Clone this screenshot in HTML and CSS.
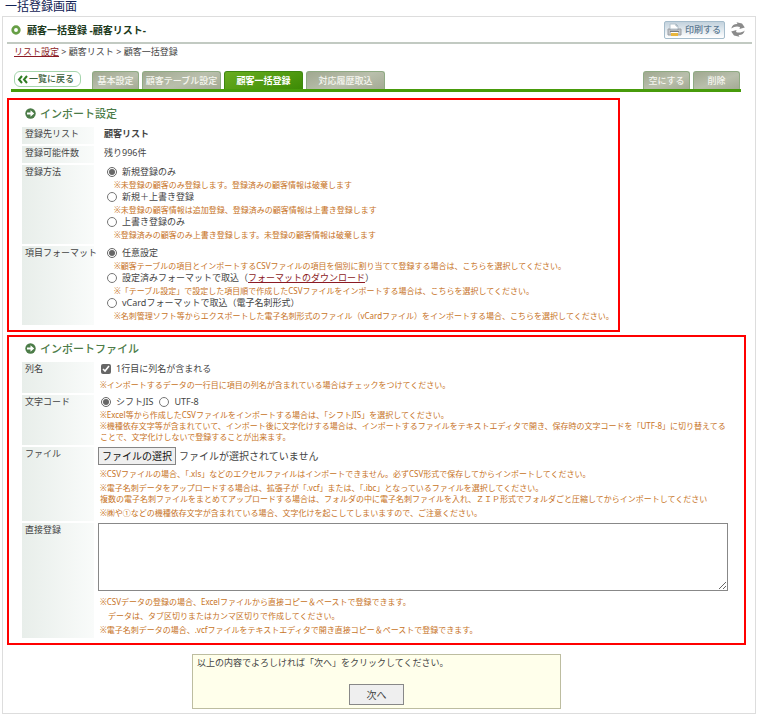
FILE: index.html
```html
<!DOCTYPE html>
<html lang="ja">
<head>
<meta charset="utf-8">
<title>一括登録画面</title>
<link rel="stylesheet" href="styles.css">
</head>
<body>
<h1 class="page-title">一括登録画面</h1>
<main class="frame">
  <header class="header">
    <svg class="ring" viewBox="0 0 10 10" aria-hidden="true"><circle cx="5" cy="5" r="3.3" fill="#fff" stroke="#669e45" stroke-width="2.7"/></svg>
    <h2 class="title">顧客一括登録 -顧客リスト-</h2>
    <button class="print" type="button">
      <svg viewBox="0 0 15 14" aria-hidden="true"><path d="M3 6V1h6l2 2v3z" fill="#fff" stroke="#b4c3cd"/><path d="M9 1v2h2" fill="none" stroke="#9bacb8"/><path d="M1 6h2v1h8V6h3v6H1z" fill="#c3c5c8" stroke="#9a9fa5"/><path d="M3 8.500h9" stroke="#777c82"/><path d="M4 10h7v3H4z" fill="#e9b63c"/><path d="M4 9h7v1H4z" fill="#fff"/></svg>
      <span>印刷する</span>
    </button>
    <button class="reload" type="button" aria-label="更新">
      <svg viewBox="0 0 14 15" aria-hidden="true"><g fill="#8b8b8b"><path d="M.3 6.500C1 3 3.500 1.800 6.500 2L5.500.2 11 1.500 13.800 5.500 8.500 7 9 5C6 3.800 3 4.500.3 6.500z"/><path d="M13.700 8.500C13 12 10.500 13.200 7.500 13l1 1.800L3 13.500.2 9.500 5.500 8 5 10C8 11.200 11 10.500 13.700 8.500z"/></g></svg>
    </button>
  </header>
  <nav class="crumbs"><a href="#">リスト設定</a> &gt; 顧客リスト &gt; 顧客一括登録</nav>
  <nav class="tabs">
    <a class="back" href="#"><svg viewBox="0 0 12 9" aria-hidden="true"><path d="M5 1L2 4.500 5 8M10 1L7 4.500 10 8" fill="none" stroke="#2f7d22" stroke-width="2"/></svg>一覧に戻る</a>
    <a class="tab" href="#">基本設定</a>
    <a class="tab wide" href="#">顧客テーブル設定</a>
    <a class="tab wide active" href="#">顧客一括登録</a>
    <a class="tab wide" href="#">対応履歴取込</a>
    <a class="tab end" href="#">空にする</a>
    <a class="tab" href="#">削除</a>
  </nav>

  <form class="form">
    <section class="box settings">
      <h3 class="heading"><svg viewBox="0 0 11 11" aria-hidden="true"><circle cx="5.500" cy="5.500" r="5.200" fill="#4c7c48"/><path d="M2 4.500h3.500V2.200L9.200 5.500 5.500 8.800V6.500H2z" fill="#fff"/></svg>インポート設定</h3>
      <div class="rows">
        <div class="row"><div class="name">登録先リスト</div><div class="cell"><b>顧客リスト</b></div></div>
        <div class="row"><div class="name">登録可能件数</div><div class="cell">残り996件</div></div>
        <div class="row" role="radiogroup" aria-label="登録方法"><div class="name">登録方法</div><div class="cell choices">
          <label class="option"><input type="radio" name="method" checked>新規登録のみ</label>
          <p class="note">※未登録の顧客のみ登録します。登録済みの顧客情報は破棄します</p>
          <label class="option"><input type="radio" name="method">新規＋上書き登録</label>
          <p class="note">※未登録の顧客情報は追加登録、登録済みの顧客情報は上書き登録します</p>
          <label class="option"><input type="radio" name="method">上書き登録のみ</label>
          <p class="note">※登録済みの顧客のみ上書き登録します。未登録の顧客情報は破棄します</p>
        </div></div>
        <div class="row" role="radiogroup" aria-label="項目フォーマット"><div class="name">項目フォーマット</div><div class="cell choices">
          <label class="option"><input type="radio" name="format" checked>任意設定</label>
          <p class="note">※顧客テーブルの項目とインポートするCSVファイルの項目を個別に割り当てて登録する場合は、こちらを選択してください。</p>
          <label class="option"><input type="radio" name="format">設定済みフォーマットで取込（<a href="#">フォーマットのダウンロード</a>）</label>
          <p class="note">※「テーブル設定」で設定した項目順で作成したCSVファイルをインポートする場合は、こちらを選択してください。</p>
          <label class="option"><input type="radio" name="format">vCardフォーマットで取込（電子名刺形式）</label>
          <p class="note">※名刺管理ソフト等からエクスポートした電子名刺形式のファイル（vCardファイル）をインポートする場合、こちらを選択してください。</p>
        </div></div>
      </div>
    </section>

    <section class="box files">
      <h3 class="heading"><svg viewBox="0 0 11 11" aria-hidden="true"><circle cx="5.500" cy="5.500" r="5.200" fill="#4c7c48"/><path d="M2 4.500h3.500V2.200L9.200 5.500 5.500 8.800V6.500H2z" fill="#fff"/></svg>インポートファイル</h3>
      <div class="rows">
        <div class="row"><div class="name">列名</div><div class="cell">
          <label class="option"><input type="checkbox" checked>1行目に列名が含まれる</label>
          <p class="note">※インポートするデータの一行目に項目の列名が含まれている場合はチェックをつけてください。</p>
        </div></div>
        <div class="row"><div class="name">文字コード</div><div class="cell">
          <div class="options" role="radiogroup" aria-label="文字コード">
            <label class="option"><input type="radio" name="code" checked>シフトJIS</label>
            <label class="option"><input type="radio" name="code">UTF-8</label>
          </div>
          <p class="note tight">※Excel等から作成したCSVファイルをインポートする場合は、「シフトJIS」を選択してください。<br>※機種依存文字等が含まれていて、インポート後に文字化けする場合は、インポートするファイルをテキストエディタで開き、保存時の文字コードを「UTF-8」に切り替えてる<br>ことで、文字化けしないで登録することが出来ます。</p>
        </div></div>
        <div class="row"><div class="name">ファイル</div><div class="cell">
          <label class="file"><input type="file"><span class="choose">ファイルの選択</span><span>ファイルが選択されていません</span></label>
          <p class="note">※CSVファイルの場合、「.xls」などのエクセルファイルはインポートできません。必ずCSV形式で保存してからインポートしてください。</p>
          <p class="note">※電子名刺データをアップロードする場合は、拡張子が「.vcf」または、「.ibc」となっているファイルを選択してください。<br>複数の電子名刺ファイルをまとめてアップロードする場合は、フォルダの中に電子名刺ファイルを入れ、ＺＩＰ形式でフォルダごと圧縮してからインポートしてください</p>
          <p class="note">※㈱や①などの機種依存文字が含まれている場合、文字化けを起こしてしまいますので、ご注意ください。</p>
        </div></div>
        <div class="row"><label class="name" for="direct">直接登録</label><div class="cell">
          <textarea id="direct" class="direct"></textarea>
          <p class="note">※CSVデータの登録の場合、Excelファイルから直接コピー＆ペーストで登録できます。</p>
          <p class="note">　データは、タブ区切りまたはカンマ区切りで作成してください。</p>
          <p class="note">※電子名刺データの場合、.vcfファイルをテキストエディタで開き直接コピー＆ペーストで登録できます。</p>
        </div></div>
      </div>
    </section>

    <div class="confirm">
      <p>以上の内容でよろしければ「次へ」をクリックしてください。</p>
      <button class="next" type="button">次へ</button>
    </div>
  </form>
</main>
</body>
</html>
```
FILE: styles.css
```css
* { box-sizing: border-box; }
body {
  margin: 0;
  background: #fff;
  color: #444;
  font: 9px/14px "Noto Sans", "Noto Sans CJK JP", sans-serif;
}
h1, h2, h3, p { margin: 0; }
button { font-family: inherit; }
a { color: #8b1a24; }

.page-title {
  padding-left: 5px;
  color: #112255;
  font-size: 12px;
  font-weight: 400;
  line-height: 13px;
}
.frame {
  margin: 3px 4px 0 2px;
  border: 1px solid #ddd;
}
.header {
  display: flex;
  align-items: center;
  height: 27px;
  margin: 0 3px 0 4px;
  padding: 0 7px 0 4px;
  border-bottom: 2px solid #c2cac2;
}
.ring { width: 10px; height: 10px; }
.title {
  margin: 0 auto 0 6px;
  color: #1c3a1c;
  font-size: 10px;
}
.print {
  display: flex;
  align-items: center;
  gap: 3px;
  height: 18px;
  margin-right: 6px;
  padding: 0 3px 0 2px;
  border: 1px solid #a5bccb;
  border-radius: 2px;
  background: linear-gradient(#c3d2dd, #fff);
  color: #5c7991;
  font-size: 9px;
  font-weight: 500;
}
.print svg { width: 15px; height: 14px; }
.reload { padding: 0; border: 0; background: none; }
.reload svg { display: block; width: 14px; height: 15px; }
.crumbs { padding: 1px 11px 0; }

.tabs {
  display: flex;
  align-items: flex-end;
  gap: 3px;
  margin: 12px 14px 0 8px;
  padding: 0 1px 0 3px;
  border-bottom: 3px solid #479b0b;
}
.tabs a { text-decoration: none; }
.back {
  display: flex;
  align-items: center;
  height: 16px;
  margin: 0 8px 2px 0;
  padding: 0 6px 0 2px;
  border: 1px solid #a5d5ac;
  border-radius: 6px;
  color: #3b603b;
  font-weight: 500;
}
.back svg { width: 12px; height: 9px; }
.tab {
  width: 47px;
  height: 18px;
  border: 1px solid #8faa83;
  border-bottom: 0;
  border-radius: 3px 3px 0 0;
  background: linear-gradient(160deg, #a0a890, #b9bfac 55%, #a4aa94);
  color: #f5f5ef;
  line-height: 17px;
  text-align: center;
  font-weight: 500;
}
.tab.wide { width: 79px; }
.tab.active {
  border-color: #3e8710;
  background: linear-gradient(160deg, #69ad20, #3d8b05);
  color: #fff;
  font-weight: 700;
}
.tab.end { margin-left: auto; }

.form { padding: 6px 9px 4px 4px; }
.box { border: 2px solid red; }
.settings { max-width: 613px; padding: 5px 4px 5px 13px; }
.files { margin-top: 3px; padding: 3px 16px 5px 13px; }
.heading {
  display: flex;
  align-items: center;
  gap: 4px;
  padding: 0 0 5px 3px;
  color: #4c7c48;
  font-size: 11px;
  font-weight: 500;
  line-height: 17px;
}
.heading svg { width: 11px; height: 11px; }
.rows { display: grid; gap: 2px; }
.row { display: grid; grid-template-columns: 72px 1fr; column-gap: 4px; }
.name {
  padding: 0 3px;
  background: linear-gradient(90deg, #e8eeea, #f9fbfa);
  white-space: nowrap;
}
.cell { padding: 0 0 3px 2px; min-width: 0; }
.settings .cell { padding-left: 6px; }
.cell.choices { padding-bottom: 4px; }
.option { display: flex; align-items: center; height: 14px; }
.option input {
  width: 10px;
  height: 10px;
  margin: 0 5px 0 1px;
  accent-color: #666;
}
.choices .option input { margin-left: 3px; }
.options { display: flex; gap: 5px; }
.note {
  margin-top: 3px;
  color: #c77326;
  font-size: 8px;
  line-height: 11px;
}
.settings .note { margin: 0 0 0 10px; white-space: nowrap; }
.note.tight { margin-top: 0; white-space: nowrap; }
.file {
  position: relative;
  display: flex;
  align-items: center;
  gap: 3px;
  margin-left: -2px;
  font-size: 10px;
}
.file input { position: absolute; width: 76px; height: 18px; opacity: 0; }
.choose {
  padding: 1px 3px;
  border: 1px solid #858585;
  background: #efefef;
  color: #111;
}
.direct {
  display: block;
  width: 100%;
  height: 68px;
  margin-bottom: 5px;
  border: 1px solid #888;
}
.files .row:last-child .cell { padding-left: 0; }
.files .row:last-child .note { margin-left: 2px; }

.confirm {
  width: 369px;
  margin: 9px auto 0;
  padding: 1px 4px 3px;
  border: 1px solid #bdbda0;
  background: #ffffeb;
}
.next {
  display: block;
  width: 55px;
  height: 21px;
  margin: 14px auto 0;
  padding: 0;
  border: 1px solid #888;
  background: #efefef;
  color: #444;
  font-size: 10px;
}
```
